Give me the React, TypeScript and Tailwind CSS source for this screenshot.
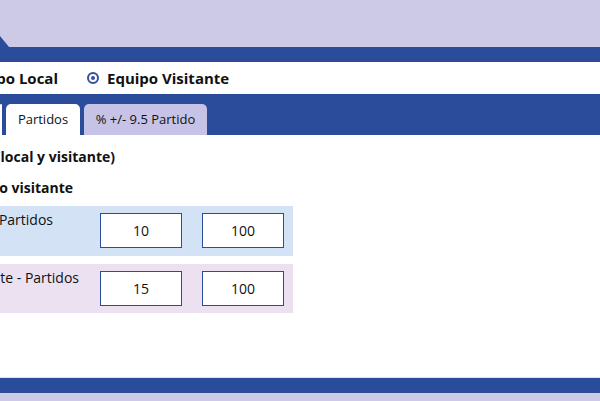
import React from "react"

const FONT = { fontFamily: '"Open Sans", "Noto Sans", sans-serif' }

function Radio({ checked }: { checked?: boolean }) {
  return (
    <span className="w-[12px] h-[12px] rounded-full border-2 border-[#34509a] flex items-center justify-center shrink-0">
      {checked && <span className="w-[4px] h-[4px] rounded-full bg-[#34509a]" />}
    </span>
  )
}

// clips its children on the left, keeping the right end visible
function ClipLeft({ width, children, className = "" }: { width: string; children: React.ReactNode; className?: string }) {
  return (
    <div className={`${width} overflow-hidden flex justify-end whitespace-nowrap shrink-0 ${className}`}>
      {children}
    </div>
  )
}

const rows = [
  { label: "Últimos Partidos", bg: "bg-[#d3e3f5]", a: "10", b: "100", h: "h-[50px]", lw: "w-[53px]" },
  { label: "Visitante - Partidos", bg: "bg-[#ebe1f1]", a: "15", b: "100", h: "h-[49px]", lw: "w-[79px]" },
]

export default function App() {
  return (
    <div className="w-[600px] h-[401px] overflow-hidden bg-white text-[#111] flex flex-col" style={FONT}>
      {/* header */}
      <div className="h-[47px] shrink-0 bg-[#cdcae8] relative">
        <svg className="absolute left-0 bottom-0" width="9" height="11" viewBox="0 0 9 11">
          <polygon points="0,0 9,11 0,11" fill="#2b4c9b" />
        </svg>
      </div>
      <div className="h-[15px] shrink-0 bg-[#2b4c9b]" />

      {/* equipo selector */}
      <div className="h-[32px] shrink-0 flex items-center text-[15px] font-bold">
        <ClipLeft width="w-[58px]">
          <div className="flex items-center gap-[8px]">
            <Radio />
            <span>Equipo Local</span>
          </div>
        </ClipLeft>
        <div className="ml-[29px] flex items-center gap-[8px]">
          <Radio checked />
          <span>Equipo Visitante</span>
        </div>
      </div>

      {/* tabs */}
      <div className="h-[41px] shrink-0 bg-[#2b4c9b] flex items-end text-[13px] font-medium">
        <ClipLeft width="w-[2px]">
          <div className="h-[31px] w-[70px] bg-white rounded-t-[5px]" />
        </ClipLeft>
        <div className="ml-[4px] h-[31px] w-[74px] bg-white rounded-t-[5px] flex items-center justify-center">
          Partidos
        </div>
        <div className="ml-[4px] h-[31px] w-[123px] bg-[#c6c3e6] rounded-t-[5px] flex items-center justify-center">
          % +/- 9.5 Partido
        </div>
      </div>

      {/* content */}
      <div className="h-[242px] shrink-0 flex flex-col pt-[12px]">
        <ClipLeft width="w-[115px]" className="h-[20px] leading-[20px] text-[14px] font-bold">
          <span>Promedio de goles (local y visitante)</span>
        </ClipLeft>
        <ClipLeft width="w-[73px]" className="mt-[11px] h-[20px] leading-[20px] text-[14px] font-bold">
          <span>Equipo visitante</span>
        </ClipLeft>
        <div className="mt-[8px] w-[293px] flex flex-col gap-[8px]">
          {rows.map((r) => (
            <div key={r.label} className={`${r.h} ${r.bg} flex pt-[7px]`}>
              <div className="w-[100px]">
                <ClipLeft width={r.lw} className="h-[20px] leading-[14px] text-[14px] font-medium">
                  <span>{r.label}</span>
                </ClipLeft>
              </div>
              <div className="w-[82px] h-[35px] bg-white border border-[#2b4c9b] flex items-center justify-center text-[14px] font-medium">
                {r.a}
              </div>
              <div className="ml-[20px] w-[82px] h-[35px] bg-white border border-[#2b4c9b] flex items-center justify-center text-[14px] font-medium">
                {r.b}
              </div>
            </div>
          ))}
        </div>
      </div>

      {/* footer */}
      <div className="h-[1px] shrink-0 bg-[#dde3ee]" />
      <div className="h-[15px] shrink-0 bg-[#2b4c9b]" />
      <div className="h-[8px] shrink-0 bg-[#cdcae8]" />
    </div>
  )
}
